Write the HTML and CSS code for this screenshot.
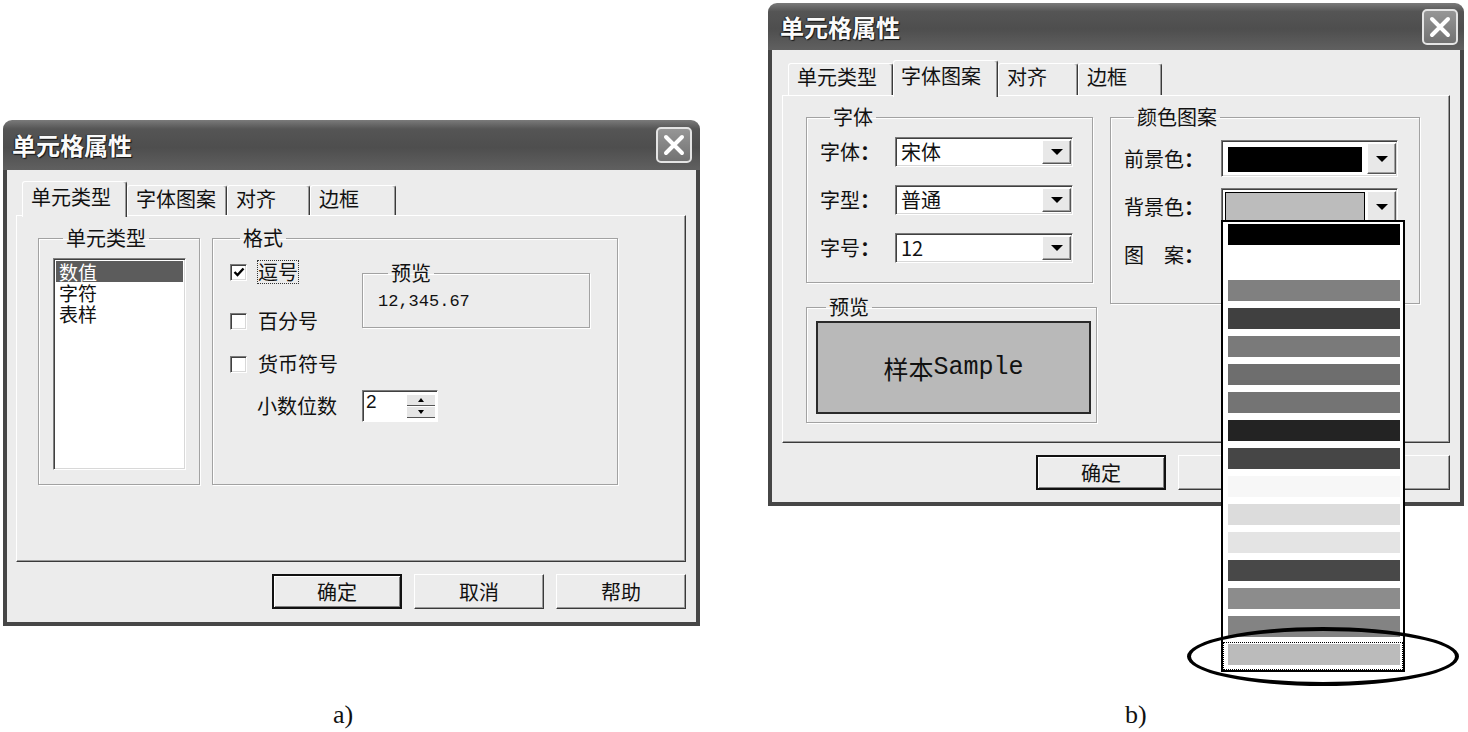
FILE: index.html
```html
<!DOCTYPE html>
<html lang="zh-CN">
<head>
  <meta charset="UTF-8">
  <meta name="viewport" content="width=device-width, initial-scale=1.0">
  <title>单元格属性</title>
  <link rel="stylesheet" href="styles.css">
</head>
<body>
  <div class="page">

    <!-- Figure a: cell type tab -->
    <figure class="figure figure-a">
      <div class="dialog dialog-a">
        <div class="titlebar">
          <span class="title">单元格属性</span>
          <span class="close">
            <svg width="24" height="24" viewBox="0 0 24 24"><path d="M4 4 L20 20 M20 4 L4 20" stroke="#fff" stroke-width="4" stroke-linecap="round"/></svg>
          </span>
        </div>
        <div class="client">
          <div class="tabs">
            <div class="tab tab-active">单元类型</div>
            <div class="tab">字体图案</div>
            <div class="tab">对齐</div>
            <div class="tab">边框</div>
          </div>
          <div class="panel">
            <fieldset class="group group-type">
              <legend>单元类型</legend>
              <div class="listbox">
                <div class="list-item selected">数值</div>
                <div class="list-item">字符</div>
                <div class="list-item">表样</div>
              </div>
            </fieldset>
            <fieldset class="group group-format">
              <legend>格式</legend>
              <div class="format-grid">
                <label class="check row-1">
                  <span class="checkbox">
                    <svg width="12" height="12" viewBox="0 0 12 12"><path d="M1.5 6 L4.5 9 L10.5 2.5" stroke="#000" stroke-width="2.4" fill="none"/></svg>
                  </span>
                  <span class="focus">逗号</span>
                </label>
                <fieldset class="group group-preview-a">
                  <legend>预览</legend>
                  <div class="preview-number">12,345.67</div>
                </fieldset>
                <label class="check row-2"><span class="checkbox"></span><span>百分号</span></label>
                <label class="check row-3"><span class="checkbox"></span><span>货币符号</span></label>
                <span class="decimals-label">小数位数</span>
                <div class="spinner">
                  <span class="spinner-value">2</span>
                  <span class="spinner-buttons">
                    <span class="spin-btn"><i class="arrow-up"></i></span>
                    <span class="spin-btn"><i class="arrow-down"></i></span>
                  </span>
                </div>
              </div>
            </fieldset>
          </div>
          <div class="buttons">
            <div class="btn btn-default">确定</div>
            <div class="btn">取消</div>
            <div class="btn">帮助</div>
          </div>
        </div>
      </div>
      <figcaption class="caption">a)</figcaption>
    </figure>

    <!-- Figure b: font and pattern tab with open colour list -->
    <figure class="figure figure-b">
      <div class="dialog dialog-b">
        <div class="titlebar">
          <span class="title">单元格属性</span>
          <span class="close">
            <svg width="24" height="24" viewBox="0 0 24 24"><path d="M4 4 L20 20 M20 4 L4 20" stroke="#fff" stroke-width="4" stroke-linecap="round"/></svg>
          </span>
        </div>
        <div class="client">
          <div class="tabs">
            <div class="tab">单元类型</div>
            <div class="tab tab-active">字体图案</div>
            <div class="tab">对齐</div>
            <div class="tab">边框</div>
          </div>
          <div class="panel">
            <div class="column-left">
              <fieldset class="group group-font">
                <legend>字体</legend>
                <div class="form-grid font-grid">
                  <span>字体<b class="colon">：</b></span>
                  <div class="select"><span class="select-text">宋体</span><span class="drop-btn"><i class="arrow-down big"></i></span></div>
                  <span>字型<b class="colon">：</b></span>
                  <div class="select"><span class="select-text">普通</span><span class="drop-btn"><i class="arrow-down big"></i></span></div>
                  <span>字号<b class="colon">：</b></span>
                  <div class="select"><span class="select-text">12</span><span class="drop-btn"><i class="arrow-down big"></i></span></div>
                </div>
              </fieldset>
              <fieldset class="group group-preview-b">
                <legend>预览</legend>
                <div class="sample">样本<span class="sample-latin">Sample</span></div>
              </fieldset>
            </div>
            <fieldset class="group group-color">
              <legend>颜色图案</legend>
              <div class="form-grid color-grid">
                <span>前景色<b class="colon">：</b></span>
                <div class="select color-select"><span class="swatch swatch-black"></span><span class="drop-btn"><i class="arrow-down big"></i></span></div>
                <span>背景色<b class="colon">：</b></span>
                <div class="select color-select"><span class="swatch swatch-grey"></span><span class="drop-btn"><i class="arrow-down big"></i></span></div>
                <span>图　案<b class="colon">：</b></span>
                <div class="select color-select"><span class="swatch"></span><span class="drop-btn"><i class="arrow-down big"></i></span></div>
              </div>
            </fieldset>
          </div>
          <div class="buttons">
            <div class="btn btn-default">确定</div>
            <div class="btn">取消</div>
            <div class="btn">帮助</div>
          </div>
        </div>
      </div>

      <!-- open colour dropdown -->
      <div class="color-list">
        <div class="color-item"><span style="--c:#000"></span></div>
        <div class="color-item"><span style="--c:#fff"></span></div>
        <div class="color-item"><span style="--c:#808080"></span></div>
        <div class="color-item"><span style="--c:#404040"></span></div>
        <div class="color-item"><span style="--c:#7a7a7a"></span></div>
        <div class="color-item"><span style="--c:#6e6e6e"></span></div>
        <div class="color-item"><span style="--c:#747474"></span></div>
        <div class="color-item"><span style="--c:#232323"></span></div>
        <div class="color-item"><span style="--c:#464646"></span></div>
        <div class="color-item"><span style="--c:#f7f7f7"></span></div>
        <div class="color-item"><span style="--c:#dcdcdc"></span></div>
        <div class="color-item"><span style="--c:#e4e4e4"></span></div>
        <div class="color-item"><span style="--c:#484848"></span></div>
        <div class="color-item"><span style="--c:#8c8c8c"></span></div>
        <div class="color-item"><span style="--c:#838383"></span></div>
        <div class="color-item selected"><span style="--c:#bbbbbb"></span></div>
      </div>
      <!-- hand drawn highlight -->
      <div class="highlight"></div>

      <figcaption class="caption">b)</figcaption>
    </figure>

  </div>
</body>
</html>
```

FILE: styles.css
```css
/* page */
body {
  margin: 0;
  background: #fff;
  font-family: "Noto Sans CJK SC", "Noto Sans", sans-serif;
  color: #111;
}

.page {
  display: flex;
  width: 1468px;
  height: 732px;
  overflow: hidden;
}

.figure {
  display: flex;
  flex-direction: column;
  margin: 0;
}

.figure-a {
  width: 697px;
  margin-left: 3px;
}

.figure-b {
  width: 696px;
  margin-left: 68px;
  position: relative;
}

.caption {
  margin-top: auto;
  margin-bottom: 2px;
  font-family: "Liberation Serif", serif;
  font-size: 26px;
  line-height: 30px;
}

.figure-a .caption { padding-left: 330px; }
.figure-b .caption { padding-left: 357px; }

/* dialog frame */
.dialog {
  display: flex;
  flex-direction: column;
}

.dialog-a { margin-top: 120px; height: 506px; }
.dialog-b { margin-top: 3px; height: 503px; }

.titlebar {
  flex-shrink: 0;
  display: flex;
  align-items: center;
  justify-content: space-between;
  border-radius: 9px 9px 0 0;
  background: linear-gradient(#7a7a7a, #555 18%, #4e4e4e 55%, #606060);
}

.dialog-a .titlebar { height: 50px; padding: 0 8px 0 9px; }
.dialog-b .titlebar { height: 47px; padding: 0 6px 0 12px; }

.title {
  font-size: 24px;
  font-weight: bold;
  line-height: 30px;
  color: #fafafa;
  text-shadow: 1px 1px 1px #111, -1px 0 1px #222;
}

.close {
  box-sizing: border-box;
  width: 36px;
  height: 36px;
  display: flex;
  align-items: center;
  justify-content: center;
  border: 2px solid #e4e4e4;
  border-radius: 5px;
  background: linear-gradient(#969696, #727272);
}

.client {
  flex: 1;
  display: flex;
  flex-direction: column;
  background: #ececec;
  border: 4px solid #464646;
  border-top: 0;
}

.dialog-a .client { padding: 11px 10px 0 9px; }
.dialog-b .client { padding: 10px 10px 0 10px; }

/* tabs */
.tabs {
  display: flex;
  align-items: flex-end;
  margin-left: 6px;
}

.dialog-a .tabs { height: 34px; }
.dialog-b .tabs { height: 35px; }

.tab {
  box-sizing: border-box;
  padding-left: 8px;
  font-size: 20px;
  line-height: 26px;
  border-top: 1px solid #fff;
  border-left: 1px solid #fff;
  border-right: 1px solid #3a3a3a;
  border-radius: 3px 3px 0 0;
  box-shadow: inset -1px 0 0 #9a9a9a;
  background: #ececec;
}

.dialog-a .tab { height: 30px; }
.dialog-b .tab { height: 32px; }

.tab-active {
  position: relative;
  z-index: 1;
  margin-bottom: -2px;
  line-height: 30px;
}

.dialog-a .tab-active { height: 36px; }
.dialog-b .tab-active { height: 37px; padding-left: 7px; }

.dialog-a .tab:nth-child(1) { width: 105px; }
.dialog-a .tab:nth-child(2) { width: 100px; }
.dialog-a .tab:nth-child(3) { width: 83px; }
.dialog-a .tab:nth-child(4) { width: 86px; }

.dialog-b .tab:nth-child(1) { width: 105px; }
.dialog-b .tab:nth-child(2) { width: 105px; }
.dialog-b .tab:nth-child(3) { width: 80px; }
.dialog-b .tab:nth-child(4) { width: 84px; }

.panel {
  box-sizing: border-box;
  display: flex;
  align-items: flex-start;
  border-top: 1px solid #fff;
  border-left: 1px solid #fff;
  border-right: 1px solid #3a3a3a;
  border-bottom: 1px solid #3a3a3a;
  box-shadow: inset -1px -1px 0 #9a9a9a;
}

.dialog-a .panel { height: 347px; padding: 12px 0 0 21px; }
.dialog-b .panel { height: 348px; padding: 11px 0 0 23px; }

/* group boxes */
.group {
  box-sizing: border-box;
  min-width: 0;
  margin: 0;
  border: 1px solid #a2a2a2;
  box-shadow: 1px 1px 0 #fff, inset 1px 1px 0 #fff;
}

.group legend {
  padding: 0 3px;
  margin-left: 10px;
  font-size: 20px;
  line-height: 20px;
}

/* figure a contents */
.group-type {
  width: 162px;
  height: 257px;
  padding: 10px 0 0 14px;
}

.listbox {
  box-sizing: border-box;
  width: 133px;
  height: 212px;
  padding: 1px;
  background: #fff;
  border: 1px solid;
  border-color: #808080 #fff #fff #808080;
  box-shadow: inset 1px 1px 0 #404040, inset -1px -1px 0 #d8d8d8;
}

.list-item {
  padding: 0 3px;
  margin: 0 1px;
  font-size: 19px;
  line-height: 21px;
}

.list-item.selected {
  background: #5c5c5c;
  color: #fff;
  margin-top: 1px;
}

.group-format {
  width: 406px;
  height: 257px;
  margin-left: 12px;
  padding: 2px 0 0 17px;
}

.format-grid {
  display: grid;
  grid-template-columns: 132px 228px;
  grid-template-rows: 44px 54px 32px 52px;
  align-items: center;
  font-size: 20px;
}

.check {
  grid-column: 1;
  display: flex;
  align-items: center;
  gap: 11px;
  line-height: 24px;
}

.row-1 { grid-row: 1; }
.row-2 { grid-row: 2; }
.row-3 { grid-row: 3; }

.checkbox {
  box-sizing: border-box;
  width: 17px;
  height: 17px;
  display: flex;
  align-items: center;
  justify-content: center;
  background: #fff;
  border: 1px solid;
  border-color: #7a7a7a #fff #fff #7a7a7a;
  box-shadow: inset 1px 1px 0 #404040, inset -1px -1px 0 #d8d8d8;
}

.focus {
  outline: 1px dotted #333;
  line-height: 22px;
}

.group-preview-a {
  grid-column: 2;
  grid-row: 1 / 3;
  align-self: start;
  width: 228px;
  height: 65px;
  margin-top: 13px;
  padding: 9px 0 0 15px;
}

.preview-number {
  font-family: "Liberation Mono", monospace;
  font-size: 17px;
  line-height: 20px;
}

.decimals-label {
  grid-column: 1;
  grid-row: 4;
  padding-left: 27px;
  line-height: 24px;
}

.spinner {
  grid-column: 2;
  grid-row: 4;
  box-sizing: border-box;
  width: 76px;
  height: 32px;
  display: flex;
  background: #fff;
  border: 1px solid;
  border-color: #7a7a7a #fff #fff #7a7a7a;
  box-shadow: inset 1px 1px 0 #404040;
}

.spinner-value {
  flex: 1;
  padding: 1px 0 0 3px;
  font-family: "Liberation Sans", sans-serif;
  font-size: 19px;
  line-height: 20px;
}

.spinner-buttons {
  display: flex;
  flex-direction: column;
  width: 28px;
  padding: 3px 2px 3px 0;
}

.spin-btn {
  flex: 1;
  display: flex;
  align-items: center;
  justify-content: center;
  background: #e6e6e6;
  border-bottom: 1px solid #555;
  border-top: 1px solid #fff;
}

.arrow-up {
  border-left: 3px solid transparent;
  border-right: 3px solid transparent;
  border-bottom: 4px solid #000;
}

.arrow-down {
  border-left: 3px solid transparent;
  border-right: 3px solid transparent;
  border-top: 4px solid #000;
}

.arrow-down.big {
  border-left-width: 6px;
  border-right-width: 6px;
  border-top-width: 6px;
}

/* figure b contents */
.column-left {
  display: flex;
  flex-direction: column;
  width: 291px;
}

.group-font {
  width: 287px;
  height: 176px;
  padding: 10px 0 0 13px;
}

.form-grid {
  display: grid;
  align-items: center;
  font-size: 20px;
  line-height: 24px;
}

.colon {
  display: inline-block;
  width: 20px;
  text-align: center;
  font-weight: bold;
}

.font-grid {
  grid-template-columns: 75px 178px;
  grid-template-rows: repeat(3, 30px);
  row-gap: 18px;
}

.select {
  box-sizing: border-box;
  height: 100%;
  display: flex;
  background: #fff;
  border: 1px solid;
  border-color: #7a7a7a #fff #fff #7a7a7a;
  box-shadow: inset 1px 1px 0 #404040, inset -1px -1px 0 #d8d8d8;
  padding: 2px 1px 2px 2px;
}

.select-text {
  flex: 1;
  padding-left: 3px;
  line-height: 24px;
}

.drop-btn {
  box-sizing: border-box;
  width: 29px;
  display: flex;
  align-items: center;
  justify-content: center;
  background: #e8e8e8;
  border: 1px solid;
  border-color: #fff #555 #555 #fff;
  box-shadow: inset -1px -1px 0 #a0a0a0;
}

.group-preview-b {
  width: 291px;
  height: 126px;
  margin-top: 14px;
  padding: 4px 0 0 9px;
}

.sample {
  box-sizing: border-box;
  width: 275px;
  height: 93px;
  display: flex;
  align-items: center;
  justify-content: center;
  background: #b9b9b9;
  border: 2px solid #2a2a2a;
  font-size: 25px;
  line-height: 30px;
}

.sample-latin {
  font-family: "Liberation Mono", monospace;
}

.group-color {
  width: 310px;
  height: 197px;
  margin-left: 13px;
  padding: 13px 0 0 13px;
}

.color-grid {
  grid-template-columns: 97px 177px;
  grid-template-rows: repeat(3, 37px);
  row-gap: 11px;
}

.color-select {
  padding: 2px 1px 2px 2px;
}

.swatch {
  flex: 1;
  margin: 4px 5px 2px 4px;
}

.swatch-black { background: #000; }

.swatch-grey {
  margin: 1px 2px 0 1px;
  background: #bcbcbc;
  border: 1px solid #000;
}

/* buttons */
.buttons {
  display: flex;
  justify-content: flex-end;
  gap: 12px;
  margin-top: 12px;
}

.btn {
  box-sizing: border-box;
  width: 130px;
  height: 35px;
  display: flex;
  align-items: center;
  justify-content: center;
  font-size: 20px;
  background: #ececec;
  border: 1px solid;
  border-color: #fff #3a3a3a #3a3a3a #fff;
  box-shadow: inset -1px -1px 0 #9a9a9a;
}

.btn-default {
  border: 2px solid #111;
  box-shadow: inset 1px 1px 0 #fff, inset -1px -1px 0 #808080;
}

/* open colour list and annotation */
.color-list {
  position: absolute;
  left: 453px;
  top: 220px;
  z-index: 5;
  box-sizing: border-box;
  width: 184px;
  height: 452px;
  background: #fff;
  border: 2px solid #000;
}

.color-item {
  box-sizing: border-box;
  height: 28px;
  padding: 2px 3px 5px 5px;
}

.color-item span {
  display: block;
  height: 21px;
  background: var(--c);
}

.color-item.selected {
  outline: 1px dotted #000;
  outline-offset: -1px;
}

.highlight {
  position: absolute;
  left: 419px;
  top: 627px;
  z-index: 6;
  box-sizing: border-box;
  width: 272px;
  height: 59px;
  border: 4px solid #000;
  border-radius: 50%;
}
```
